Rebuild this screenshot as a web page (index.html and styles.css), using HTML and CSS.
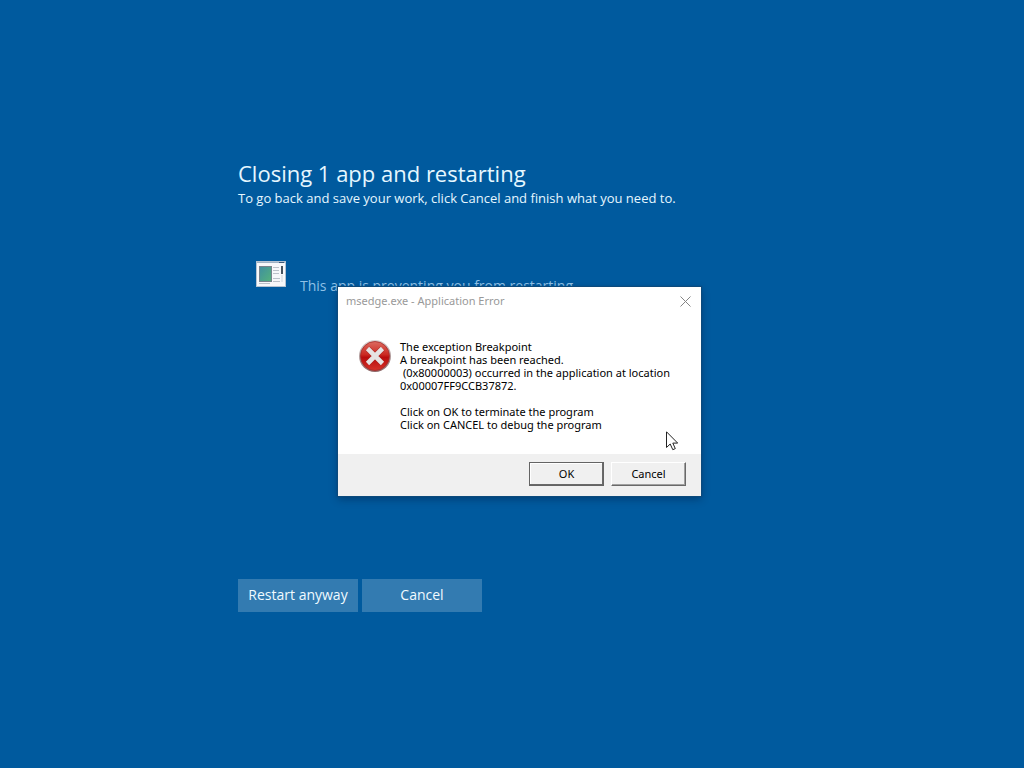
FILE: index.html
```html
<!DOCTYPE html>
<html lang="en">
<head>
<meta charset="utf-8">
<title>Closing 1 app and restarting</title>
<link rel="stylesheet" href="styles.css">
</head>
<body>
<main class="screen">
  <header class="intro">
    <h1 class="title">Closing 1 app and restarting</h1>
    <p class="subtitle">To go back and save your work, click Cancel and finish what you need to.</p>
  </header>
  <section class="app">
    <svg class="app-icon" viewBox="0 0 30 26" aria-hidden="true">
      <defs><linearGradient id="pic" x1="0" y1="0" x2="1" y2="1"><stop offset="0" stop-color="#3f8fa0"/><stop offset="1" stop-color="#55b27c"/></linearGradient></defs>
      <rect x="0.5" y="0.5" width="29" height="25" fill="#f7f8fa" stroke="#b5c3d2"/>
      <path d="M1 1.500h28" stroke="#9fb2c4"/>
      <path d="M23 1.500h5" stroke="#3c5877"/>
      <rect x="3.500" y="5.500" width="12" height="15" fill="url(#pic)" stroke="#77838c"/>
      <path d="M17 6.500h6M17 9.500h6M17 12.500h6M17 17.500h7M17 20.500h7M3 22.500h11" stroke="#bcc2ca"/>
      <path d="M26 5v8" stroke="#46525e" stroke-width="2"/>
      <path d="M26 14v7" stroke="#e2e6ea" stroke-width="2"/>
    </svg>
    <p class="app-status">This app is preventing you from restarting.</p>
  </section>
  <div class="actions">
    <button class="action" type="button">Restart anyway</button>
    <button class="action" type="button">Cancel</button>
  </div>
</main>
<div class="dialog" role="alertdialog" aria-labelledby="dialog-title" aria-describedby="dialog-text">
  <div class="dialog-bar">
    <h2 class="dialog-title" id="dialog-title">msedge.exe - Application Error</h2>
    <button class="close" type="button" aria-label="Close">
      <svg class="close-icon" viewBox="0 0 11 11" aria-hidden="true"><path d="M0.500 0.500l10 10M10.500 0.500l-10 10" fill="none" stroke="#858585"/></svg>
    </button>
  </div>
  <div class="dialog-body">
    <svg class="error-icon" viewBox="0 0 32 32" aria-hidden="true">
      <defs>
        <linearGradient id="rim" x1="0" y1="0" x2="0" y2="1"><stop offset="0" stop-color="#d9d3d3"/><stop offset="1" stop-color="#8c6666"/></linearGradient>
        <linearGradient id="red" x1="0" y1="0" x2="0" y2="1"><stop offset="0" stop-color="#dc6a60"/><stop offset="0.450" stop-color="#cb2a22"/><stop offset="0.550" stop-color="#b80d0d"/><stop offset="1" stop-color="#d5332a"/></linearGradient>
      </defs>
      <circle cx="16" cy="16" r="16" fill="url(#rim)"/>
      <circle cx="16" cy="16" r="14.500" fill="url(#red)" stroke="#a52b28" stroke-width="0.800"/>
      <path d="M8.500 8.500l15 15M23.500 8.500l-15 15" stroke="#a3201c" stroke-width="5.600"/>
      <path d="M8.500 8.500l15 15M23.500 8.500l-15 15" stroke="#e6e3e3" stroke-width="4.600"/>
    </svg>
    <p class="message" id="dialog-text">The exception Breakpoint
A breakpoint has been reached.
 (0x80000003) occurred in the application at location
0x00007FF9CCB37872.

Click on OK to terminate the program
Click on CANCEL to debug the program</p>
  </div>
  <div class="dialog-footer">
    <button class="push push-default" type="button">OK</button>
    <button class="push" type="button">Cancel</button>
  </div>
</div>
<svg class="pointer" viewBox="0 0 12 20" aria-hidden="true"><path d="M0.500 0.800v15.700l3.700-3.500 2.600 5.700 2.500-1.100-2.500-5.500h4.900z" fill="#fff" stroke="#222"/></svg>
</body>
</html>
```
FILE: styles.css
```css
* { box-sizing: border-box; }

body {
  margin: 0;
  min-height: 100vh;
  background: #005a9e;
  color: #fff;
  font-family: "Open Sans", "Noto Sans", sans-serif;
}

h1, h2, p { margin: 0; font-weight: 400; }

button { margin: 0; padding: 0; font-family: inherit; }

.screen {
  display: flex;
  flex-direction: column;
  padding: 156px 24px 24px 238px;
}

.title {
  font-size: 22px;
  line-height: 34px;
  color: #e6f7ff;
}

.subtitle {
  font-size: 13px;
  font-weight: 500;
  line-height: 16px;
  color: #e6f7ff;
}

.app {
  display: flex;
  gap: 14px;
  margin-top: 55px;
  padding-left: 18px;
}

.app-icon { width: 30px; height: 26px; }

.app-status {
  padding-top: 15px;
  font-size: 14px;
  line-height: 20px;
  color: #8fc1e6;
}

.actions {
  display: flex;
  gap: 4px;
  margin-top: 283px;
}

.action {
  width: 120px;
  height: 33px;
  padding-bottom: 2px;
  border: 0;
  background: #337bb1;
  color: #f0faff;
  font-size: 14px;
}

.dialog {
  position: absolute;
  top: 287px;
  left: 338px;
  width: 363px;
  background: #fff;
  color: #000;
  font-family: "Noto Sans", "Open Sans", sans-serif;
  font-size: 11px;
  box-shadow: 0 0 1px 1px #0c4a7c, 0 3px 8px rgba(0, 20, 50, 0.4);
}

.dialog-bar {
  display: flex;
  align-items: center;
  justify-content: space-between;
  height: 28px;
  padding: 0 10px 0 8px;
}

.dialog-title { font-size: 11px; line-height: 16px; color: #999; }

.close {
  display: flex;
  border: 0;
  background: none;
}

.close-icon { width: 11px; height: 11px; }

.dialog-body {
  display: flex;
  gap: 9px;
  padding: 25px 20px 23px 21px;
}

.error-icon { flex: none; width: 32px; height: 32px; }

.message {
  line-height: 13px;
  white-space: pre-wrap;
}

.dialog-footer {
  display: flex;
  justify-content: flex-end;
  gap: 7px;
  padding: 8px 15px 10px;
  background: #f0f0f0;
}

.push {
  width: 75px;
  height: 24px;
  padding-bottom: 2px;
  border: 1px solid;
  border-color: #fff #696969 #696969 #fff;
  background: #f0f0f0;
  box-shadow: inset -1px -1px #a0a0a0;
  color: #000;
  font-size: 11px;
}

.push-default {
  border-color: #646464;
  box-shadow: inset -1px -1px #696969, inset 1px 1px #fff;
}

.pointer {
  position: absolute;
  top: 431px;
  left: 666px;
  width: 12px;
  height: 20px;
}
```
